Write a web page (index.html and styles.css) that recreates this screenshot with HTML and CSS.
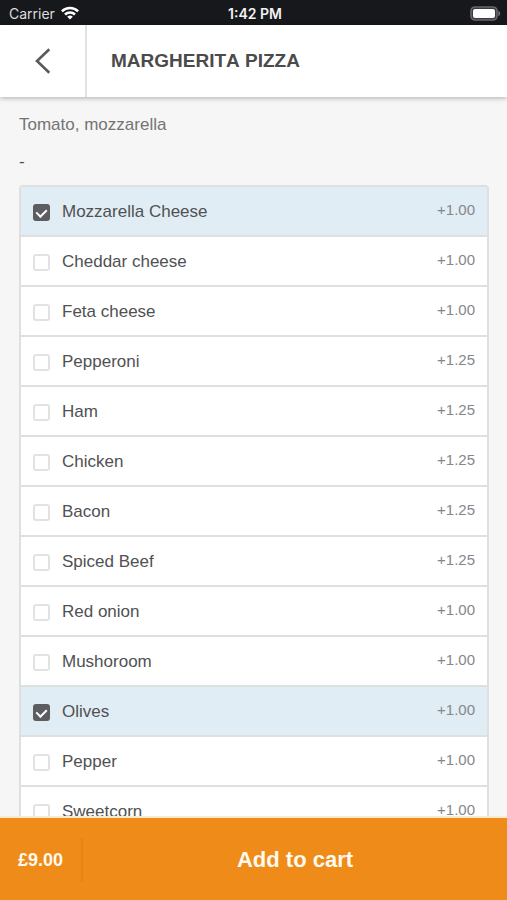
FILE: index.html
```html
<!DOCTYPE html>
<html lang="en">
<head>
<meta charset="utf-8">
<meta name="viewport" content="width=device-width, initial-scale=1">
<title>Margherita Pizza</title>
<link rel="stylesheet" href="styles.css">
</head>
<body>
<div class="status">
  <div class="status-left">
    <span>Carrier</span>
    <svg class="wifi" width="18" height="14" viewBox="0 0 18 14" aria-hidden="true">
      <g fill="none" stroke="#fff" stroke-width="2.5">
        <path d="M0.9 5.3a11.5 11.5 0 0 1 16.2 0"/>
        <path d="M4 8.5a7.1 7.1 0 0 1 10 0"/>
      </g>
      <path fill="#fff" d="M9 13.6L6.2 10.8a4 4 0 0 1 5.6 0z"/>
    </svg>
  </div>
  <span class="status-time">1:42 PM</span>
  <div class="status-right">
    <svg width="31" height="16" viewBox="0 0 31 16" aria-hidden="true">
      <rect x="1" y="1" width="26" height="13" rx="4" fill="#3a3b3f" stroke="#66686b" stroke-width="1.6"/>
      <rect x="3" y="3" width="22" height="9" rx="2" fill="#fff"/>
      <path d="M28.4 4.8c2.4 1 2.4 4.4 0 5.4z" fill="#77797c"/>
    </svg>
  </div>
</div>
<header class="header">
  <button class="back" type="button" aria-label="Back">
    <svg width="16" height="26" viewBox="0 0 16 26" aria-hidden="true">
      <path d="M14.3 1.2L2 13l12.3 11.8" fill="none" stroke="#5a5a5a" stroke-width="2.6"/>
    </svg>
  </button>
  <h1 class="title">MARGHERITA PIZZA</h1>
</header>
<main class="content">
  <p class="description">Tomato, mozzarella</p>
  <p class="group">-</p>
  <ul class="options">
    <li><label class="option"><input type="checkbox" checked><span class="name">Mozzarella Cheese</span><span class="price">+1.00</span></label></li>
    <li><label class="option"><input type="checkbox"><span class="name">Cheddar cheese</span><span class="price">+1.00</span></label></li>
    <li><label class="option"><input type="checkbox"><span class="name">Feta cheese</span><span class="price">+1.00</span></label></li>
    <li><label class="option"><input type="checkbox"><span class="name">Pepperoni</span><span class="price">+1.25</span></label></li>
    <li><label class="option"><input type="checkbox"><span class="name">Ham</span><span class="price">+1.25</span></label></li>
    <li><label class="option"><input type="checkbox"><span class="name">Chicken</span><span class="price">+1.25</span></label></li>
    <li><label class="option"><input type="checkbox"><span class="name">Bacon</span><span class="price">+1.25</span></label></li>
    <li><label class="option"><input type="checkbox"><span class="name">Spiced Beef</span><span class="price">+1.25</span></label></li>
    <li><label class="option"><input type="checkbox"><span class="name">Red onion</span><span class="price">+1.00</span></label></li>
    <li><label class="option"><input type="checkbox"><span class="name">Mushoroom</span><span class="price">+1.00</span></label></li>
    <li><label class="option"><input type="checkbox" checked><span class="name">Olives</span><span class="price">+1.00</span></label></li>
    <li><label class="option"><input type="checkbox"><span class="name">Pepper</span><span class="price">+1.00</span></label></li>
    <li><label class="option"><input type="checkbox"><span class="name">Sweetcorn</span><span class="price">+1.00</span></label></li>
  </ul>
</main>
<footer class="cart">
  <span class="total">£9.00</span>
  <button class="add" type="button">Add to cart</button>
</footer>
</body>
</html>
```
FILE: styles.css
```css
* {
  box-sizing: border-box;
}

body {
  margin: 0;
  height: 100vh;
  display: flex;
  flex-direction: column;
  overflow: hidden;
  background: #f6f6f6;
  color: #505153;
  font-family: "Liberation Sans", Arial, sans-serif;
}

button {
  border: 0;
  padding: 0;
  background: none;
  font: inherit;
  color: inherit;
  cursor: pointer;
}

.status {
  flex: none;
  display: grid;
  grid-template-columns: 1fr auto 1fr;
  align-items: center;
  height: 25px;
  padding: 2px 6px 0 9px;
  background: #17181c;
  color: #f2f2f2;
  font: 14px/20px Inter, "Liberation Sans", sans-serif;
}

.status-left {
  display: flex;
  align-items: center;
  gap: 6px;
  color: #dcdcdc;
}

.status svg {
  display: block;
}

.status .wifi {
  margin-bottom: 1px;
}

.status-time {
  font-weight: 600;
}

.status-right {
  display: flex;
  justify-content: flex-end;
}

.header {
  flex: none;
  display: flex;
  position: relative;
  height: 72px;
  background: #fff;
  box-shadow: 0 1px 5px rgba(0, 0, 0, 0.3);
}

.back {
  display: flex;
  align-items: center;
  justify-content: center;
  width: 87px;
  border-right: 2px solid #e2e2e2;
}

.title {
  margin: 0;
  padding: 0 24px;
  align-self: center;
  color: #4b4b4b;
  font-size: 19px;
  font-kerning: none;
  line-height: 24px;
}

.content {
  flex: 1;
  min-height: 0;
  overflow: hidden;
  padding: 16px 18px 0 19px;
}

.description,
.group {
  margin: 0;
  font-size: 17px;
  line-height: 24px;
}

.description {
  margin-bottom: 13px;
  color: #747474;
}

.group {
  margin-bottom: 11px;
}

.options {
  margin: 0;
  padding: 0;
  list-style: none;
  overflow: hidden;
  border: 2px solid #dee0e0;
  border-bottom: 0;
  border-radius: 4px;
}

.option {
  display: flex;
  align-items: center;
  height: 50px;
  padding: 2px 12px 0;
  border-bottom: 2px solid #dee0e0;
  background: #fff;
}

.option:has(input:checked) {
  background: #e1edf4;
}

.option input {
  appearance: none;
  flex: none;
  width: 17px;
  height: 17px;
  margin: 1px 12px 0 0;
  border: 2px solid #e2e2e2;
  border-radius: 3px;
  background: #fff;
}

.option input:checked {
  border-color: #5b5d61;
  background: #5b5d61;
  display: flex;
  align-items: center;
  justify-content: center;
}

.option input:checked::before {
  content: "";
  width: 5px;
  height: 8px;
  margin-bottom: 2px;
  border: solid #fff;
  border-width: 0 2px 2px 0;
  transform: rotate(45deg);
}

.name {
  flex: 1;
  font-size: 17px;
  line-height: 24px;
}

.price {
  margin-bottom: 4px;
  color: #858789;
  font-size: 15px;
  line-height: 20px;
}

.cart {
  flex: none;
  display: flex;
  align-items: center;
  height: 84px;
  padding-top: 2px;
  border-top: 2px solid #fbe9d2;
  background: #ef8c19;
  color: #fffaf0;
  font-weight: bold;
}

.total {
  width: 83px;
  padding-left: 18px;
  border-right: 2px solid #e68416;
  font-size: 18px;
  line-height: 44px;
}

.add {
  flex: 1;
  align-self: stretch;
  font-size: 22px;
}
```
